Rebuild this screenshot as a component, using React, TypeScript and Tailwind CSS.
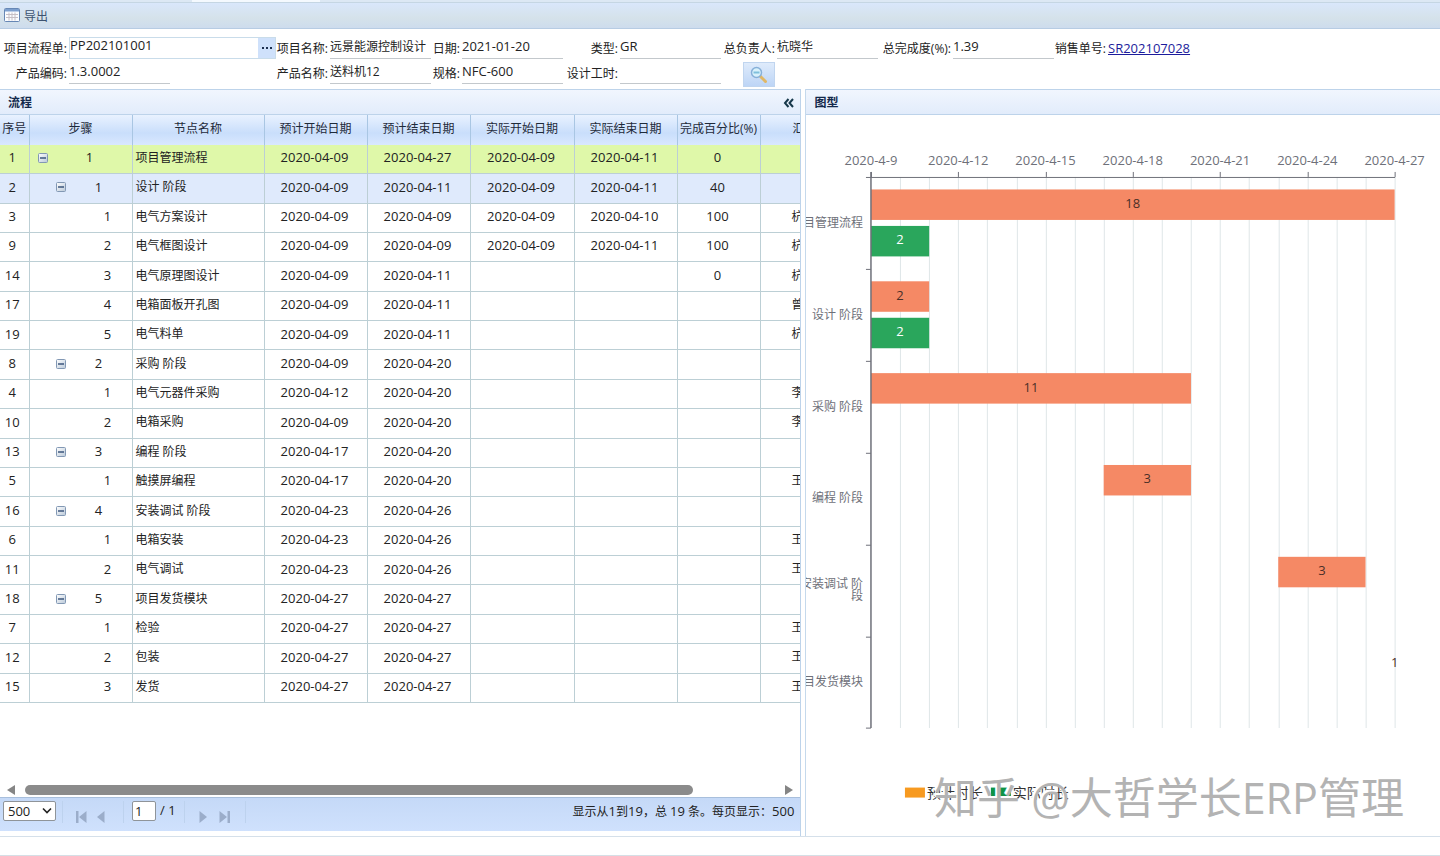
import { useState } from "react"

type Row = {
  id: number
  level: number
  step: number
  name: string
  planStart: string
  planEnd: string
  realStart?: string
  realEnd?: string
  percent?: number
  owner?: string
}

type Task = {
  label: string[]
  plan: [number, number]
  real?: [number, number]
}

const rows: Row[] = [
  { id: 1, level: 0, step: 1, name: "项目管理流程", planStart: "2020-04-09", planEnd: "2020-04-27", realStart: "2020-04-09", realEnd: "2020-04-11", percent: 0 },
  { id: 2, level: 1, step: 1, name: "设计 阶段", planStart: "2020-04-09", planEnd: "2020-04-11", realStart: "2020-04-09", realEnd: "2020-04-11", percent: 40 },
  { id: 3, level: 2, step: 1, name: "电气方案设计", planStart: "2020-04-09", planEnd: "2020-04-09", realStart: "2020-04-09", realEnd: "2020-04-10", percent: 100, owner: "杭" },
  { id: 9, level: 2, step: 2, name: "电气框图设计", planStart: "2020-04-09", planEnd: "2020-04-09", realStart: "2020-04-09", realEnd: "2020-04-11", percent: 100, owner: "杭" },
  { id: 14, level: 2, step: 3, name: "电气原理图设计", planStart: "2020-04-09", planEnd: "2020-04-11", percent: 0, owner: "杭" },
  { id: 17, level: 2, step: 4, name: "电箱面板开孔图", planStart: "2020-04-09", planEnd: "2020-04-11", owner: "曾" },
  { id: 19, level: 2, step: 5, name: "电气料单", planStart: "2020-04-09", planEnd: "2020-04-11", owner: "杭" },
  { id: 8, level: 1, step: 2, name: "采购 阶段", planStart: "2020-04-09", planEnd: "2020-04-20" },
  { id: 4, level: 2, step: 1, name: "电气元器件采购", planStart: "2020-04-12", planEnd: "2020-04-20", owner: "李" },
  { id: 10, level: 2, step: 2, name: "电箱采购", planStart: "2020-04-09", planEnd: "2020-04-20", owner: "李" },
  { id: 13, level: 1, step: 3, name: "编程 阶段", planStart: "2020-04-17", planEnd: "2020-04-20" },
  { id: 5, level: 2, step: 1, name: "触摸屏编程", planStart: "2020-04-17", planEnd: "2020-04-20", owner: "王" },
  { id: 16, level: 1, step: 4, name: "安装调试 阶段", planStart: "2020-04-23", planEnd: "2020-04-26" },
  { id: 6, level: 2, step: 1, name: "电箱安装", planStart: "2020-04-23", planEnd: "2020-04-26", owner: "王" },
  { id: 11, level: 2, step: 2, name: "电气调试", planStart: "2020-04-23", planEnd: "2020-04-26", owner: "王" },
  { id: 18, level: 1, step: 5, name: "项目发货模块", planStart: "2020-04-27", planEnd: "2020-04-27" },
  { id: 7, level: 2, step: 1, name: "检验", planStart: "2020-04-27", planEnd: "2020-04-27", owner: "王" },
  { id: 12, level: 2, step: 2, name: "包装", planStart: "2020-04-27", planEnd: "2020-04-27", owner: "王" },
  { id: 15, level: 2, step: 3, name: "发货", planStart: "2020-04-27", planEnd: "2020-04-27", owner: "王" },
]

const headers = ["序号", "步骤", "节点名称", "预计开始日期", "预计结束日期", "实际开始日期", "实际结束日期", "完成百分比(%)"]

// start and end are days counted from 2020-4-9
const tasks: Task[] = [
  { label: ["项目管理流程"], plan: [0, 18], real: [0, 2] },
  { label: ["设计 阶段"], plan: [0, 2], real: [0, 2] },
  { label: ["采购 阶段"], plan: [0, 11] },
  { label: ["编程 阶段"], plan: [8, 11] },
  { label: ["安装调试 阶", "段"], plan: [14, 17] },
  { label: ["项目发货模块"], plan: [18, 18] },
]

const levelPadding = ["pl-2", "pl-[26px]", "pl-11"]

function Field({ id, label, value, lookup = false }: { id: string; label: string; value: string; lookup?: boolean }) {
  const textSize = /[\u4e00-\u9fff]/.test(value) ? "text-xs" : "text-[13px]"

  return (
    <>
      <label htmlFor={id} className="pt-1 pr-0.5 text-right text-xs whitespace-nowrap">
        {label}:
      </label>
      {lookup ? (
        <div className="flex h-[22px] border border-[#c9dcea]">
          <input id={id} defaultValue={value} className="min-w-0 flex-1 pb-1 text-[13px] outline-none" />
          <button
            aria-label="选择"
            className="flex w-[17px] items-center justify-center gap-0.5 bg-[#cfe1fb]"
          >
            <i className="size-0.5 bg-[#1c3050]"></i>
            <i className="size-0.5 bg-[#1c3050]"></i>
            <i className="size-0.5 bg-[#1c3050]"></i>
          </button>
        </div>
      ) : (
        <input
          id={id}
          defaultValue={value}
          className={`${textSize} h-[22px] w-[101px] border-b border-[#c3c8cc] pb-1 outline-none`}
        />
      )}
    </>
  )
}

function CollapseIcon() {
  return (
    <svg width="10" height="10" viewBox="0 0 10 10">
      <defs>
        <linearGradient id="collapse" x1="0" y1="0" x2="1" y2="1">
          <stop offset="0" stopColor="#fff" />
          <stop offset="1" stopColor="#b9c8d8" />
        </linearGradient>
      </defs>
      <rect x="0.5" y="0.5" width="9" height="9" rx="1" fill="url(#collapse)" stroke="#8298b4" />
      <path d="M2 5h6" stroke="#23406b" strokeWidth="1.3" />
    </svg>
  )
}

function ProcessTable() {
  return (
    <table className="h-[588px] w-[863px] table-fixed border-collapse">
      <colgroup>
        <col className="w-[29px]" />
        <col className="w-[103px]" />
        <col className="w-[132px]" />
        <col className="w-[103px]" />
        <col className="w-[103px]" />
        <col className="w-[104px]" />
        <col className="w-[103px]" />
        <col className="w-[83px]" />
        <col className="w-[103px]" />
      </colgroup>
      <thead>
        <tr className="h-[30px] bg-linear-to-b from-[#e9f2ff] via-[#c9defb] via-60% to-[#d9e8ff] text-xs text-[#1e2a3a]">
          {headers.map((header) => (
            <th key={header} className="border-r border-[#a9c6e3] p-0 pb-0.5 font-normal whitespace-nowrap">
              {header}
            </th>
          ))}
          <th className="p-0 pb-0.5 pl-8 text-left font-normal">汇</th>
        </tr>
      </thead>
      <tbody>
        {rows.map((row) => (
          <tr
            key={row.id}
            className={`${row.id === 1 ? "bg-[#dff8a9]" : row.id === 2 ? "bg-[#dfeafc]" : "bg-white"} border-b border-[#bccfd5] text-center text-[13px] [&>td]:border-r [&>td]:border-[#bccfd5] [&>td]:p-0 [&>td]:pb-0.5`}
          >
            <td><span className="-ml-1">{row.id}</span></td>
            <td>
              <div className={`flex items-center ${levelPadding[row.level]}`}>
                {row.level < 2 ? (
                  <button aria-label="折叠">
                    <CollapseIcon />
                  </button>
                ) : (
                  <span className="w-2.5"></span>
                )}
                <span className="flex-1">{row.step}</span>
              </div>
            </td>
            <td className="text-left text-xs">
              <span className="pl-[3px]">{row.name}</span>
            </td>
            <td><span className="pr-0.5">{row.planStart}</span></td>
            <td><span className="pr-0.5">{row.planEnd}</span></td>
            <td><span className="pr-0.5">{row.realStart}</span></td>
            <td><span className="pr-0.5">{row.realEnd}</span></td>
            <td><span className="pr-0.5">{row.percent}</span></td>
            <td className="text-left text-xs">
              <span className="pl-[31px]">{row.owner}</span>
            </td>
          </tr>
        ))}
      </tbody>
    </table>
  )
}

function Pager() {
  const [pageSize, setPageSize] = useState("500")

  return (
    <div className="mb-[5px] flex h-[34px] items-start justify-between border-t border-[#a8bfdc] bg-linear-to-b from-[#c5d9f7] to-[#cfe1fd] pt-[3px] pr-1.5 pl-[3px]">
      <div className="flex items-start">
        <div className="relative">
          <select
            aria-label="每页条数"
            value={pageSize}
            onChange={(e) => setPageSize(e.target.value)}
            className="block h-5 w-[53px] appearance-none rounded-xs border border-[#8f9499] bg-white pl-1 text-[13px] leading-4"
          >
            <option>500</option>
            <option>100</option>
          </select>
          <svg className="pointer-events-none absolute top-1.5 right-1" width="10" height="8" viewBox="0 0 10 8">
            <path d="M1 1.5l4 4 4-4" fill="none" stroke="#222" strokeWidth="1.6" />
          </svg>
        </div>
        <div className="ml-1.5 flex h-[22px] w-[62px] items-end gap-2.5 border-x border-[#bdd2ee] pl-3">
          <button aria-label="第一页">
            <svg className="block" width="12" height="12" viewBox="0 0 12 12" fill="#9badca">
              <path d="M1 0h2.500v12H1zM11.500 0v12L4 6z" />
            </svg>
          </button>
          <button aria-label="上一页">
            <svg className="block" width="8" height="12" viewBox="0 0 8 12" fill="#9badca">
              <path d="M7.500 0v12L0 6z" />
            </svg>
          </button>
        </div>
        <div className="ml-2 flex items-center gap-1 text-[13px]">
          <input aria-label="页码" defaultValue="1" className="h-5 w-6 rounded-xs border border-[#8f9499] bg-white px-0.5" />
          <span>/ 1</span>
        </div>
        <div className="ml-2 flex h-[22px] w-[62px] items-end gap-3 border-x border-[#bdd2ee] pl-3.5">
          <button aria-label="下一页">
            <svg className="block" width="8" height="12" viewBox="0 0 8 12" fill="#9badca">
              <path d="M0.500 0v12L8 6z" />
            </svg>
          </button>
          <button aria-label="最后一页">
            <svg className="block" width="12" height="12" viewBox="0 0 12 12" fill="#9badca">
              <path d="M8.500 0H11v12H8.500zM0.500 0v12L8 6z" />
            </svg>
          </button>
        </div>
      </div>
      <p className="text-xs leading-5 whitespace-nowrap">
        显示从<span className="text-[13px]">1</span>到<span className="text-[13px]">19</span>，总{" "}
        <span className="text-[13px]">19</span> 条。每页显示：<span className="text-[13px]">500</span>
      </p>
    </div>
  )
}

function GanttChart() {
  const left = 65
  const top = 62
  const rowHeight = 91.9
  const bottom = top + rowHeight * 6
  const x = (day: number) => left + day * 29.11
  const days = Array.from({ length: 18 }, (_, i) => i + 1)
  const ticks = [0, 3, 6, 9, 12, 15, 18]

  return (
    <svg viewBox="0 0 634 720" className="block h-auto w-full text-[13px]">
      <g stroke="#dfe6e8">
        {days.map((day) => (
          <path key={day} d={`M${Math.round(x(day)) + 0.5} ${top}V${bottom}`} />
        ))}
      </g>
      {tasks.map((task, i) => {
        const y = top + i * rowHeight
        const [start, end] = task.plan
        return (
          <g key={task.label[0]}>
            <rect x={x(start)} y={y + 12.5} width={x(end) - x(start)} height="30.500" fill="#f58965" />
            <text x={(x(start) + x(end)) / 2} y={y + 31} textAnchor="middle" fill="#4a2f28">
              {end - start || 1}
            </text>
            {task.real && (
              <>
                <rect x={x(task.real[0])} y={y + 49} width={x(task.real[1]) - x(task.real[0])} height="30.500" fill="#2aa65c" />
                <text x={x(1)} y={y + 67} textAnchor="middle" fill="#fff">
                  {task.real[1] - task.real[0]}
                </text>
              </>
            )}
            {task.label.map((line, n) => (
              <text
                key={line}
                x={57}
                y={y + (task.label.length > 1 ? 44 : 50) + n * 12}
                textAnchor="end"
                className="text-xs"
                fill="#6e7079"
              >
                {line}
              </text>
            ))}
          </g>
        )
      })}
      <g stroke="#6e7079" fill="none">
        <path d={`M${left} ${top + 0.5}H${x(18) + 0.5}`} />
        <path d={`M${left} ${top - 5}V${bottom}`} strokeWidth="1.500" />
        {ticks.map((day) => (
          <path key={day} d={`M${Math.round(x(day)) + 0.5} ${top - 5}v5`} />
        ))}
        {[0, 1, 2, 3, 4, 5, 6].map((n) => (
          <path key={n} d={`M${left - 5} ${Math.round(top + n * rowHeight) + 0.5}h5`} />
        ))}
      </g>
      <g fill="#6e7079" textAnchor="middle">
        {ticks.map((day) => (
          <text key={day} x={x(day)} y={50}>
            2020-4-{day + 9}
          </text>
        ))}
      </g>
      <rect x="99" y="673" width="20" height="10" fill="#f79a20" />
      <rect x="185" y="673" width="20" height="10" fill="#0f9246" />
      <g className="text-sm" fill="#333">
        <text x="121" y="683">预计时长</text>
        <text x="207" y="683">实际时长</text>
      </g>
    </svg>
  )
}

function PanelHeader({ title, collapsible = false }: { title: string; collapsible?: boolean }) {
  return (
    <div className="flex h-[26px] items-center justify-between border-y border-[#bdd3ea] bg-linear-to-b from-[#f1f6fe] to-[#e2ecfb] pt-0.5 pr-1.5 text-[#13294b]">
      <h2 className="pl-2 text-xs font-bold">{title}</h2>
      {collapsible && (
        <button aria-label="收起">
          <svg className="block" width="11" height="10" viewBox="0 0 11 10">
            <path d="M5.500 1L2 5l3.500 4M10 1L6.500 5 10 9" fill="none" stroke="#17384a" strokeWidth="2" />
          </svg>
        </button>
      )}
    </div>
  )
}

function App() {
  return (
    <div className="flex min-h-screen flex-col bg-white font-['Open_Sans','Noto_Sans_CJK_SC',sans-serif] text-[#222]">
      <div className="flex h-[3px] border-b border-[#c5d6e3] bg-[#dce8f4]">
        <div className="ml-48 w-32 bg-[#f4f9fe]"></div>
      </div>
      <div className="flex h-[26px] items-center border-b border-[#b7cce3] bg-linear-to-b from-[#d9e7fb] via-[#d5e2ea] via-60% to-[#cddced]">
        <button className="flex items-center gap-1 pt-0.5 pl-1 text-xs text-[#3d5270]">
          <svg className="mb-1" width="16" height="14" viewBox="0 0 16 14">
            <rect x="0.5" y="0.5" width="15" height="13" rx="1" fill="#fafcff" stroke="#6687b5" />
            <path d="M1 1h14v2.500H1z" fill="#7c9fce" />
            <path d="M2 6.500h12M2 9.500h12M5 4.500v8M8 4.500v8M11 4.500v8" stroke="#c6bfc5" />
          </svg>
          导出
        </button>
      </div>

      <form
        className="grid h-[60px] shrink-0 grid-cols-[69px_207px_54px_100px_32px_100px_58px_100px_57px_100px_76px_100px_55px_auto] content-start gap-y-[3px] pt-2"
        onSubmit={(e) => e.preventDefault()}
      >
        <Field id="flow" label="项目流程单" value="PP202101001" lookup />
        <Field id="project" label="项目名称" value="远景能源控制设计" />
        <Field id="date" label="日期" value="2021-01-20" />
        <Field id="type" label="类型" value="GR" />
        <Field id="leader" label="总负责人" value="杭晓华" />
        <Field id="progress" label="总完成度(%)" value="1.39" />
        <span className="pt-1 pr-0.5 text-right text-xs whitespace-nowrap">销售单号:</span>
        <a href="#order" className="pt-0.5 text-[13px] text-[#1c1c9c] underline">
          SR202107028
        </a>
        <Field id="code" label="产品编码" value="1.3.0002" />
        <Field id="product" label="产品名称" value="送料机12" />
        <Field id="spec" label="规格" value="NFC-600" />
        <Field id="hours" label="设计工时" value="" />
        <button
          aria-label="查询"
          className="ml-[23px] flex h-[25px] w-8 items-center justify-center border border-[#c0d5ef] bg-linear-to-b from-[#dfebfb] to-[#bdd5f6]"
        >
          <svg width="18" height="18" viewBox="0 0 18 18">
            <path d="M10 10l5.500 5.500" stroke="#e0b765" strokeWidth="3" strokeLinecap="round" />
            <circle cx="6.500" cy="6.500" r="5" fill="#d9f1fb" stroke="#87b0d8" strokeWidth="1.500" />
            <path d="M3.500 6.500h6" stroke="#7fc0dc" strokeWidth="2" />
          </svg>
        </button>
      </form>

      <main className="flex flex-1 border-b border-[#d5e0ea]">
        <section className="flex w-[56%] flex-col border-r border-[#c5d9ec] pr-1">
          <div className="flex flex-1 flex-col border-r border-[#bdd3ea]">
            <PanelHeader title="流程" collapsible />
            <div className="flex-1 overflow-hidden">
              <ProcessTable />
            </div>
            <div className="flex h-3.5 items-center gap-2.5 px-[7px]">
              <svg width="8" height="10" viewBox="0 0 8 10" fill="#858585">
                <path d="M8 0v10L0 5z" />
              </svg>
              <div className="flex-1">
                <div className="h-2.5 w-[89%] rounded-full bg-[#8b8b8b]"></div>
              </div>
              <svg width="8" height="10" viewBox="0 0 8 10" fill="#858585">
                <path d="M0 0v10l8-5z" />
              </svg>
            </div>
            <Pager />
          </div>
        </section>
        <section className="relative min-w-0 flex-1">
          <PanelHeader title="图型" />
          <GanttChart />
          <p className="absolute right-9 bottom-2.5 text-[43px] leading-[56px] whitespace-nowrap text-[#b3b3b3] [text-shadow:-1px_-1px_0_#fff,-2px_-2px_0_#fff]">
            知乎 @大哲学长ERP管理
          </p>
        </section>
      </main>
      <footer className="h-[19px] border-b border-[#d5dfe6]"></footer>
    </div>
  )
}

export default App
